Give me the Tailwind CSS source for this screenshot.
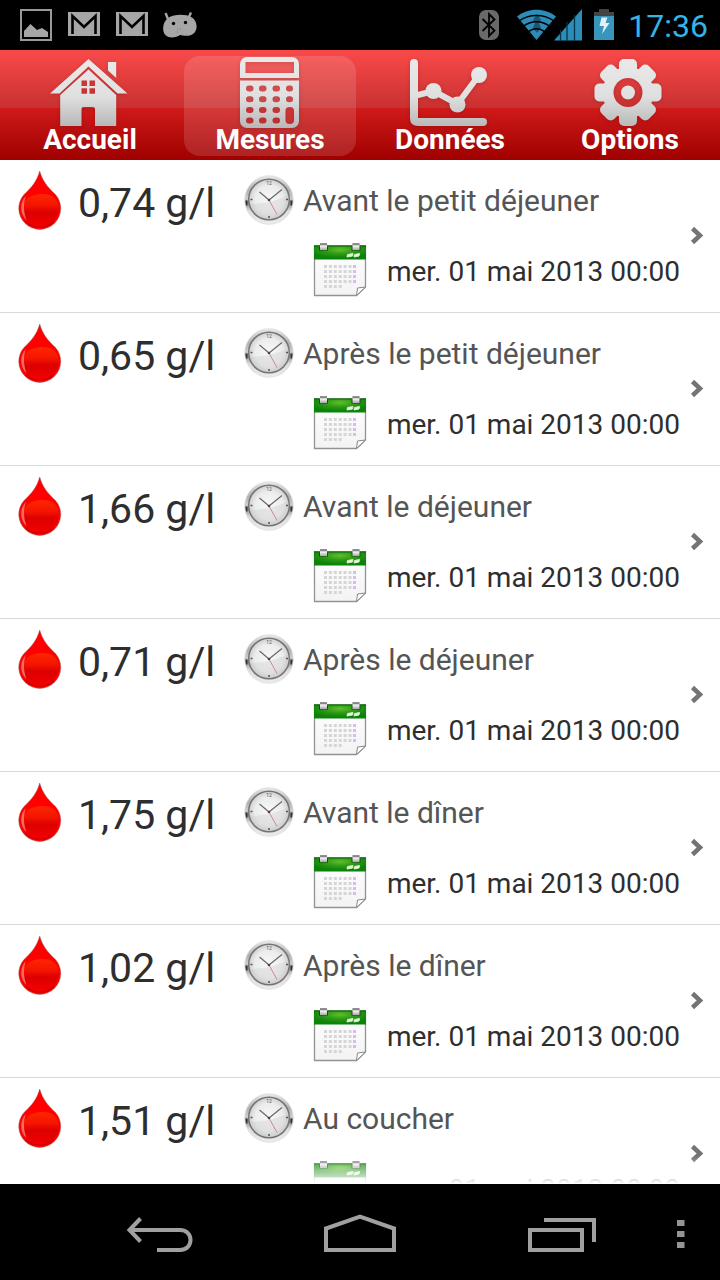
<!DOCTYPE html>
<html lang="fr">
<head>
<meta charset="utf-8">
<meta name="viewport" content="width=device-width, initial-scale=1">
<title>Mesures</title>
<script src="https://cdn.jsdelivr.net/npm/@tailwindcss/browser@4"></script>
</head>
<body class="flex h-screen flex-col overflow-hidden bg-black font-['Roboto','Noto_Sans',sans-serif]">

<!-- Shared icon definitions -->
<svg class="absolute size-0" aria-hidden="true">
  <defs>
    <linearGradient id="silver" x1="0" y1="0" x2="0" y2="1"><stop offset="0" stop-color="#e9e9e9"/><stop offset=".55" stop-color="#e0e0e0"/><stop offset="1" stop-color="#b8b8b8"/></linearGradient>
    <linearGradient id="blood" x1="0" y1="0" x2="0" y2="1"><stop offset="0" stop-color="#ff2600"/><stop offset=".35" stop-color="#f41400"/><stop offset=".55" stop-color="#dc0000"/><stop offset="1" stop-color="#f40000"/></linearGradient>
    <linearGradient id="rim" x1="0" y1="0" x2="0" y2="1"><stop offset="0" stop-color="#e8e8e8"/><stop offset=".3" stop-color="#b4b0ae"/><stop offset=".48" stop-color="#cfcdcc"/><stop offset=".55" stop-color="#8a8886"/><stop offset=".72" stop-color="#dcdcdc"/><stop offset="1" stop-color="#ececec"/></linearGradient>
    <radialGradient id="face"><stop offset="0" stop-color="#f8f8f8"/><stop offset=".7" stop-color="#ececec"/><stop offset="1" stop-color="#cfcfcf"/></radialGradient>
    <radialGradient id="green" cx=".5" cy=".3" r=".6"><stop offset="0" stop-color="#5fbf2c"/><stop offset=".5" stop-color="#2f9a16"/><stop offset="1" stop-color="#0b830b"/></radialGradient>
    <linearGradient id="paper" x1="0" y1="0" x2="0" y2="1"><stop offset="0" stop-color="#ffffff"/><stop offset="1" stop-color="#f3f3f3"/></linearGradient>
    <linearGradient id="clip" x1="0" y1="0" x2="0" y2="1"><stop offset="0" stop-color="#777"/><stop offset=".4" stop-color="#f2f2f2"/><stop offset="1" stop-color="#a8a8a8"/></linearGradient>
  </defs>
  <symbol id="drop" viewBox="0 0 44 60">
    <path d="M21.700 1C24.500 11 30 17.500 37.500 24.500A21 21 0 1 1 6 24.500C13.500 17.500 19 11 21.700 1Z" fill="#fe0000" stroke="#a06060" stroke-opacity=".6" stroke-width=".8"/>
    <path d="M6 33C9 26.500 17 24 25 24C32 24 37.500 27 40 33C43 46 34 57 21.700 57C10 57 2 46 6 33Z" fill="url(#blood)"/>
    <path d="M8 26C1.500 32 1.500 44 8.500 50C5.500 42 5 33 8 26Z" fill="#ff8a80" opacity=".75"/>
    <path d="M7.500 51.500A20.500 20.500 0 0 0 36 51.500" fill="none" stroke="#a00000" stroke-opacity=".5" stroke-width="1.200"/>
  </symbol>
  <symbol id="clock" viewBox="0 0 50 50">
    <circle cx="25" cy="25" r="24.300" fill="url(#rim)" stroke="#dedede" stroke-width=".8"/>
    <circle cx="25" cy="24.500" r="20.300" fill="url(#face)" stroke="#747474" stroke-width="1.500"/>
    <path d="M1.500 25.500h2v5h-1.500zM46.500 25.500h2l-.5 5h-1.500z" fill="#333"/>
    <path d="M6 29C18 29 34 26 44 20A19.500 19.500 0 0 1 6 29Z" fill="#c4c4c4" opacity=".3"/>
    <text x="25" y="10" text-anchor="middle" font-size="5" fill="#555">12</text>
    <path d="M25 41v2M6.500 24.500h2M42 24.500h2" stroke="#555" stroke-width="1.500"/>
    <path d="M25 25L15.500 17M25 25L38 14.500" stroke="#666" stroke-width="1.100"/>
    <path d="M25 25L33 39.500" stroke="#c88080" stroke-width=".9"/>
    <circle cx="25" cy="25" r="1.300" fill="#444"/>
  </symbol>
  <symbol id="calendar" viewBox="0 0 54 54">
    <path d="M1.500 3h51v41l-9 8.500H1.500Z" fill="url(#paper)" stroke="#929292" stroke-width="1.300"/>
    <path d="M1 2.500h52v14H1Z" fill="url(#green)"/>
    <path d="M1 3h52" stroke="#146414" stroke-width="1.200"/>
    <path d="M6 3.500h9v4H6zM38.500 3.500h9v4h-9z" fill="#164b16"/>
    <path d="M7 .5h7v6.500H7zM39.500 .5h7v6.500h-7z" fill="url(#clip)"/>
    <path d="M7 1h7M39.500 1h7" stroke="#666"/>
    <path d="M34.500 11.500l5.500-1-.5 2.500-5.500 1zM41.500 11.500l5-1-.5 2.500-5 1z" fill="#eaf7e4" stroke="#d5efca"/>
    <path d="M11 23.500h27.500M11 28.500h27.500M11 33.500h27.500M11 38.500h27.500M11 43.500h18" stroke="#d6d6d6" stroke-width="3" stroke-dasharray="3 1.900"/>
    <path d="M40 23.500h3M40 28.500h3M40 33.500h3M40 38.500h3" stroke="#d9b8fb" stroke-width="3"/>
    <path d="M43.500 52.500L44.500 45L52.500 44Z" fill="#fff" stroke="#888"/>
  </symbol>
  <symbol id="chevron" viewBox="0 0 14 20">
    <path d="M2.500 2.500L10 9.500L2.500 16.500" fill="none" stroke="#747474" stroke-width="4.500"/>
  </symbol>
</svg>

<!-- System status bar -->
<header class="flex h-[50px] shrink-0 items-center justify-between pr-3 pl-5">
  <svg class="h-[50px] w-[180px]" viewBox="20 0 180 50" role="img" aria-label="Notifications">
    <path d="M21 10h30v30H21Z" fill="none" stroke="#999" stroke-width="2"/>
    <path d="M24 37V31L30.500 24L37 30L42 28L48 32V37Z" fill="#a6a6a6"/>
    <g id="mail"><path d="M68 12h32v24H68Z" fill="#a6a6a6"/><path d="M72.500 34V16L84 27L95.500 16V34" fill="none" stroke="#000" stroke-width="2.600"/></g>
    <use href="#mail" x="48"/>
    <path d="M165.500 13L168 19M191 12.500L188.500 18" stroke="#a6a6a6" stroke-width="2.400"/>
    <path d="M168 18C174 14 186 14 191 17C197 20 198 28 195 32C192 37 184 36 180 35C176 38 168 39 164.500 34C162 29 163 22 168 18Z" fill="#a6a6a6"/>
    <circle cx="173.500" cy="23.500" r="1.700"/><circle cx="185.500" cy="22.500" r="1.700"/>
    <path d="M177 29h1M180 29h1M177 32h1" stroke="#777"/>
  </svg>
  <div class="flex items-center gap-3">
    <svg class="h-[50px] w-[138px]" viewBox="478 0 138 50" role="img" aria-label="Bluetooth, Wi-Fi, réseau, batterie en charge">
      <rect x="479" y="10" width="20" height="30" rx="7" fill="#696969"/>
      <path d="M482.500 19L494.500 30.500L489 36V14L494.500 19.500L482.500 31" fill="none" stroke="#000" stroke-width="1.800"/>
      <path d="M536.500 40L517 16.500C528 7.500 545 7.500 556 16.500Z" fill="#2c8db8"/>
      <path d="M537 14l4 6-2 3 2 5-4 5-4-5 2-5-2-3z" fill="#185774"/>
      <path d="M519 21C529 13.500 544 13.500 554 21M523 26.500C531 20 542 20 550 26.500M528 32C533 27.500 540 27.500 545 32" fill="none" stroke="#000" stroke-width="1.500"/>
      <path d="M554 40.500L582 9V40.500Z" fill="#2c8db8"/>
      <path d="M560.500 30V41M567 22V41M574.500 15V41" stroke="#063449" stroke-width="1.300"/>
      <path d="M594 12h5V9h10v3h5v4h-20Z" fill="#444"/>
      <path d="M594 16h20v24h-20Z" fill="#3895bb"/>
      <path d="M601.500 17.500h6L605.500 23H609.500L602 34L604 26H599.500Z" fill="#e2f1f7"/>
    </svg>
    <time class="pt-0.5 text-[32px] leading-10 text-[#33b5e5]">17:36</time>
  </div>
</header>

<!-- Tab bar -->
<nav class="grid h-[110px] shrink-0 grid-cols-4 bg-[linear-gradient(180deg,#f94a4a_0%,#c93030_53%,#d01a1a_53%,#9f0000_100%)] text-center text-[28px] leading-6 font-bold text-white" aria-label="Sections">
  <a href="#accueil" class="mx-1 mt-1.5 mb-1 flex flex-col items-center rounded-2xl">
    <svg class="h-[72px] w-20 drop-shadow-sm" viewBox="50 56 80 72" aria-hidden="true">
      <path fill="url(#silver)" fill-rule="evenodd" d="M88.500 59L50 93.500H59.500L88.500 66.500L117.500 93.500H127.500ZM108 62H116.200V78L108 70.500ZM88.500 69.500L60.200 95V126H81.500V109Q81.500 107 83.500 107H93Q95 107 95 109V126H116.200V95ZM81.500 80.500H87V86H81.500ZM89.500 80.500H95V86H89.500ZM81.500 88.300H87V93.800H81.500ZM89.500 88.300H95V93.800H89.500Z"/>
    </svg>
    Accueil
  </a>
  <a href="#mesures" aria-current="page" class="mx-1 mt-1.5 mb-1 flex flex-col items-center rounded-2xl bg-white/13">
    <svg class="h-[72px] w-20 drop-shadow-sm" viewBox="230 56 80 72" aria-hidden="true">
      <mask id="keys" maskUnits="userSpaceOnUse" x="229" y="56" width="80" height="74">
        <rect x="240" y="57" width="59" height="71" rx="7" fill="#fff"/>
        <path d="M240 78h59v2.500h-59zM245.500 62H294V73H245.500Z"/>
        <path d="M249 88.500h1.500M262 88.500h1.500M275.500 88.500h1.500M289 88.500h1M249 99.200h1.500M262 99.200h1.500M275.500 99.200h1.500M289 99.200h1M249 110h1.500M262 110h1.500M275.500 110h1.500M249 120.500h1.500M262 120.500h1.500M275.500 120.500h1.500" stroke="#000" stroke-width="6" stroke-linecap="round"/>
        <rect x="285.500" y="107" width="8.500" height="17" rx="4"/>
      </mask>
      <rect x="240" y="57" width="59" height="71" fill="url(#silver)" mask="url(#keys)"/>
    </svg>
    Mesures
  </a>
  <a href="#donnees" class="mx-1 mt-1.5 mb-1 flex flex-col items-center rounded-2xl">
    <svg class="h-[72px] w-20 drop-shadow-sm" viewBox="410 56 80 72" aria-hidden="true">
      <mask id="plot" maskUnits="userSpaceOnUse" x="408" y="56" width="84" height="74">
        <path d="M414 63V118Q414 122 418 122H483" fill="none" stroke="#fff" stroke-width="8" stroke-linecap="round"/>
        <path d="M414 96L433.500 91L457.500 104L479 75" fill="none" stroke="#fff" stroke-width="6"/>
        <circle cx="433.500" cy="91" r="8" fill="#fff"/><circle cx="457.500" cy="104.500" r="8" fill="#fff"/><circle cx="479" cy="75" r="8" fill="#fff"/>
      </mask>
      <rect x="409" y="58" width="79" height="69" fill="url(#silver)" mask="url(#plot)"/>
    </svg>
    Données
  </a>
  <a href="#options" class="mx-1 mt-1.5 mb-1 flex flex-col items-center rounded-2xl">
    <svg class="h-[72px] w-20 drop-shadow-sm" viewBox="590 56 80 72" aria-hidden="true">
      <mask id="gear" maskUnits="userSpaceOnUse" x="588" y="56" width="84" height="74">
        <g fill="#fff">
          <circle cx="628" cy="92.500" r="25.500"/>
          <rect id="tooth" x="619" y="59" width="18" height="67" rx="5"/>
          <use href="#tooth" transform="rotate(45 628 92.500)"/>
          <use href="#tooth" transform="rotate(90 628 92.500)"/>
          <use href="#tooth" transform="rotate(135 628 92.500)"/>
        </g>
        <circle cx="628" cy="92.500" r="14.500"/>
        <circle cx="628" cy="92.500" r="7" fill="#fff"/>
      </mask>
      <rect x="594" y="58" width="70" height="69" fill="url(#silver)" mask="url(#gear)"/>
    </svg>
    Options
  </a>
</nav>

<!-- Measurement list -->
<main class="relative min-h-0 flex-1 overflow-hidden bg-white text-[#2e2e2e]">
  <ul>
    <li class="border-b border-[#d9d9d9]">
      <a href="#m1" class="flex h-[152px] items-center gap-2.5 pr-4 pl-[18px]">
        <div class="flex-1 self-start pt-1">
          <div class="flex h-[72px] items-center">
            <svg class="h-[60px] w-11" aria-hidden="true"><use href="#drop"/></svg>
            <span class="w-[182px] pt-1.5 pl-4 text-[41px] leading-[48px]">0,74 g/l</span>
            <svg class="size-[50px]" aria-hidden="true"><use href="#clock"/></svg>
            <span class="pt-0.5 pl-[9px] text-[30px] leading-9 text-[#555]">Avant le petit déjeuner</span>
          </div>
          <div class="flex h-[68px] items-center justify-end gap-5">
            <svg class="size-[54px]" aria-hidden="true"><use href="#calendar"/></svg>
            <time class="pt-1 text-[28px] leading-8">mer. 01 mai 2013 00:00</time>
          </div>
        </div>
        <svg class="h-5 w-3.5" aria-hidden="true"><use href="#chevron"/></svg>
      </a>
    </li>
    <li class="border-b border-[#d9d9d9]">
      <a href="#m2" class="flex h-[152px] items-center gap-2.5 pr-4 pl-[18px]">
        <div class="flex-1 self-start pt-1">
          <div class="flex h-[72px] items-center">
            <svg class="h-[60px] w-11" aria-hidden="true"><use href="#drop"/></svg>
            <span class="w-[182px] pt-1.5 pl-4 text-[41px] leading-[48px]">0,65 g/l</span>
            <svg class="size-[50px]" aria-hidden="true"><use href="#clock"/></svg>
            <span class="pt-0.5 pl-[9px] text-[30px] leading-9 text-[#555]">Après le petit déjeuner</span>
          </div>
          <div class="flex h-[68px] items-center justify-end gap-5">
            <svg class="size-[54px]" aria-hidden="true"><use href="#calendar"/></svg>
            <time class="pt-1 text-[28px] leading-8">mer. 01 mai 2013 00:00</time>
          </div>
        </div>
        <svg class="h-5 w-3.5" aria-hidden="true"><use href="#chevron"/></svg>
      </a>
    </li>
    <li class="border-b border-[#d9d9d9]">
      <a href="#m3" class="flex h-[152px] items-center gap-2.5 pr-4 pl-[18px]">
        <div class="flex-1 self-start pt-1">
          <div class="flex h-[72px] items-center">
            <svg class="h-[60px] w-11" aria-hidden="true"><use href="#drop"/></svg>
            <span class="w-[182px] pt-1.5 pl-4 text-[41px] leading-[48px]">1,66 g/l</span>
            <svg class="size-[50px]" aria-hidden="true"><use href="#clock"/></svg>
            <span class="pt-0.5 pl-[9px] text-[30px] leading-9 text-[#555]">Avant le déjeuner</span>
          </div>
          <div class="flex h-[68px] items-center justify-end gap-5">
            <svg class="size-[54px]" aria-hidden="true"><use href="#calendar"/></svg>
            <time class="pt-1 text-[28px] leading-8">mer. 01 mai 2013 00:00</time>
          </div>
        </div>
        <svg class="h-5 w-3.5" aria-hidden="true"><use href="#chevron"/></svg>
      </a>
    </li>
    <li class="border-b border-[#d9d9d9]">
      <a href="#m4" class="flex h-[152px] items-center gap-2.5 pr-4 pl-[18px]">
        <div class="flex-1 self-start pt-1">
          <div class="flex h-[72px] items-center">
            <svg class="h-[60px] w-11" aria-hidden="true"><use href="#drop"/></svg>
            <span class="w-[182px] pt-1.5 pl-4 text-[41px] leading-[48px]">0,71 g/l</span>
            <svg class="size-[50px]" aria-hidden="true"><use href="#clock"/></svg>
            <span class="pt-0.5 pl-[9px] text-[30px] leading-9 text-[#555]">Après le déjeuner</span>
          </div>
          <div class="flex h-[68px] items-center justify-end gap-5">
            <svg class="size-[54px]" aria-hidden="true"><use href="#calendar"/></svg>
            <time class="pt-1 text-[28px] leading-8">mer. 01 mai 2013 00:00</time>
          </div>
        </div>
        <svg class="h-5 w-3.5" aria-hidden="true"><use href="#chevron"/></svg>
      </a>
    </li>
    <li class="border-b border-[#d9d9d9]">
      <a href="#m5" class="flex h-[152px] items-center gap-2.5 pr-4 pl-[18px]">
        <div class="flex-1 self-start pt-1">
          <div class="flex h-[72px] items-center">
            <svg class="h-[60px] w-11" aria-hidden="true"><use href="#drop"/></svg>
            <span class="w-[182px] pt-1.5 pl-4 text-[41px] leading-[48px]">1,75 g/l</span>
            <svg class="size-[50px]" aria-hidden="true"><use href="#clock"/></svg>
            <span class="pt-0.5 pl-[9px] text-[30px] leading-9 text-[#555]">Avant le dîner</span>
          </div>
          <div class="flex h-[68px] items-center justify-end gap-5">
            <svg class="size-[54px]" aria-hidden="true"><use href="#calendar"/></svg>
            <time class="pt-1 text-[28px] leading-8">mer. 01 mai 2013 00:00</time>
          </div>
        </div>
        <svg class="h-5 w-3.5" aria-hidden="true"><use href="#chevron"/></svg>
      </a>
    </li>
    <li class="border-b border-[#d9d9d9]">
      <a href="#m6" class="flex h-[152px] items-center gap-2.5 pr-4 pl-[18px]">
        <div class="flex-1 self-start pt-1">
          <div class="flex h-[72px] items-center">
            <svg class="h-[60px] w-11" aria-hidden="true"><use href="#drop"/></svg>
            <span class="w-[182px] pt-1.5 pl-4 text-[41px] leading-[48px]">1,02 g/l</span>
            <svg class="size-[50px]" aria-hidden="true"><use href="#clock"/></svg>
            <span class="pt-0.5 pl-[9px] text-[30px] leading-9 text-[#555]">Après le dîner</span>
          </div>
          <div class="flex h-[68px] items-center justify-end gap-5">
            <svg class="size-[54px]" aria-hidden="true"><use href="#calendar"/></svg>
            <time class="pt-1 text-[28px] leading-8">mer. 01 mai 2013 00:00</time>
          </div>
        </div>
        <svg class="h-5 w-3.5" aria-hidden="true"><use href="#chevron"/></svg>
      </a>
    </li>
    <li class="border-b border-[#d9d9d9]">
      <a href="#m7" class="flex h-[152px] items-center gap-2.5 pr-4 pl-[18px]">
        <div class="flex-1 self-start pt-1">
          <div class="flex h-[72px] items-center">
            <svg class="h-[60px] w-11" aria-hidden="true"><use href="#drop"/></svg>
            <span class="w-[182px] pt-1.5 pl-4 text-[41px] leading-[48px]">1,51 g/l</span>
            <svg class="size-[50px]" aria-hidden="true"><use href="#clock"/></svg>
            <span class="pt-0.5 pl-[9px] text-[30px] leading-9 text-[#555]">Au coucher</span>
          </div>
          <div class="flex h-[68px] items-center justify-end gap-5">
            <svg class="size-[54px]" aria-hidden="true"><use href="#calendar"/></svg>
            <time class="pt-1 text-[28px] leading-8">mer. 01 mai 2013 00:00</time>
          </div>
        </div>
        <svg class="h-5 w-3.5" aria-hidden="true"><use href="#chevron"/></svg>
      </a>
    </li>
  </ul>
  <div class="pointer-events-none absolute inset-x-0 bottom-0 h-7 bg-linear-to-b from-white/0 to-white"></div>
</main>

<!-- System navigation bar -->
<footer class="flex h-24 shrink-0 items-center pl-[58px]">
  <button type="button" aria-label="Retour" class="flex flex-1 justify-center">
    <svg class="h-24 w-20" viewBox="119 1184 80 96"><path d="M157 1250H180C194 1250 194 1230 180 1230H131M140.500 1218.500L129.500 1230L140.500 1241.500" fill="none" stroke="#a0a0a0" stroke-width="4"/></svg>
  </button>
  <button type="button" aria-label="Accueil du téléphone" class="flex flex-1 justify-center">
    <svg class="h-24 w-20" viewBox="320 1184 80 96"><path d="M326 1250V1228.500L360 1216.500L394 1228.500V1250Z" fill="none" stroke="#a0a0a0" stroke-width="4"/></svg>
  </button>
  <button type="button" aria-label="Applications récentes" class="flex flex-1 justify-center">
    <svg class="h-24 w-20" viewBox="521 1184 80 96"><path d="M530 1230H582V1250H530ZM544 1220H594V1242" fill="none" stroke="#a0a0a0" stroke-width="4"/></svg>
  </button>
  <button type="button" aria-label="Menu" class="flex w-[58px]">
    <svg class="h-24 w-10" viewBox="662 1184 40 96"><path d="M677 1220h7.500v6H677zM677 1231h7.500v6H677zM677 1242h7.500v6H677z" fill="#949494"/></svg>
  </button>
</footer>
</body>
</html>
